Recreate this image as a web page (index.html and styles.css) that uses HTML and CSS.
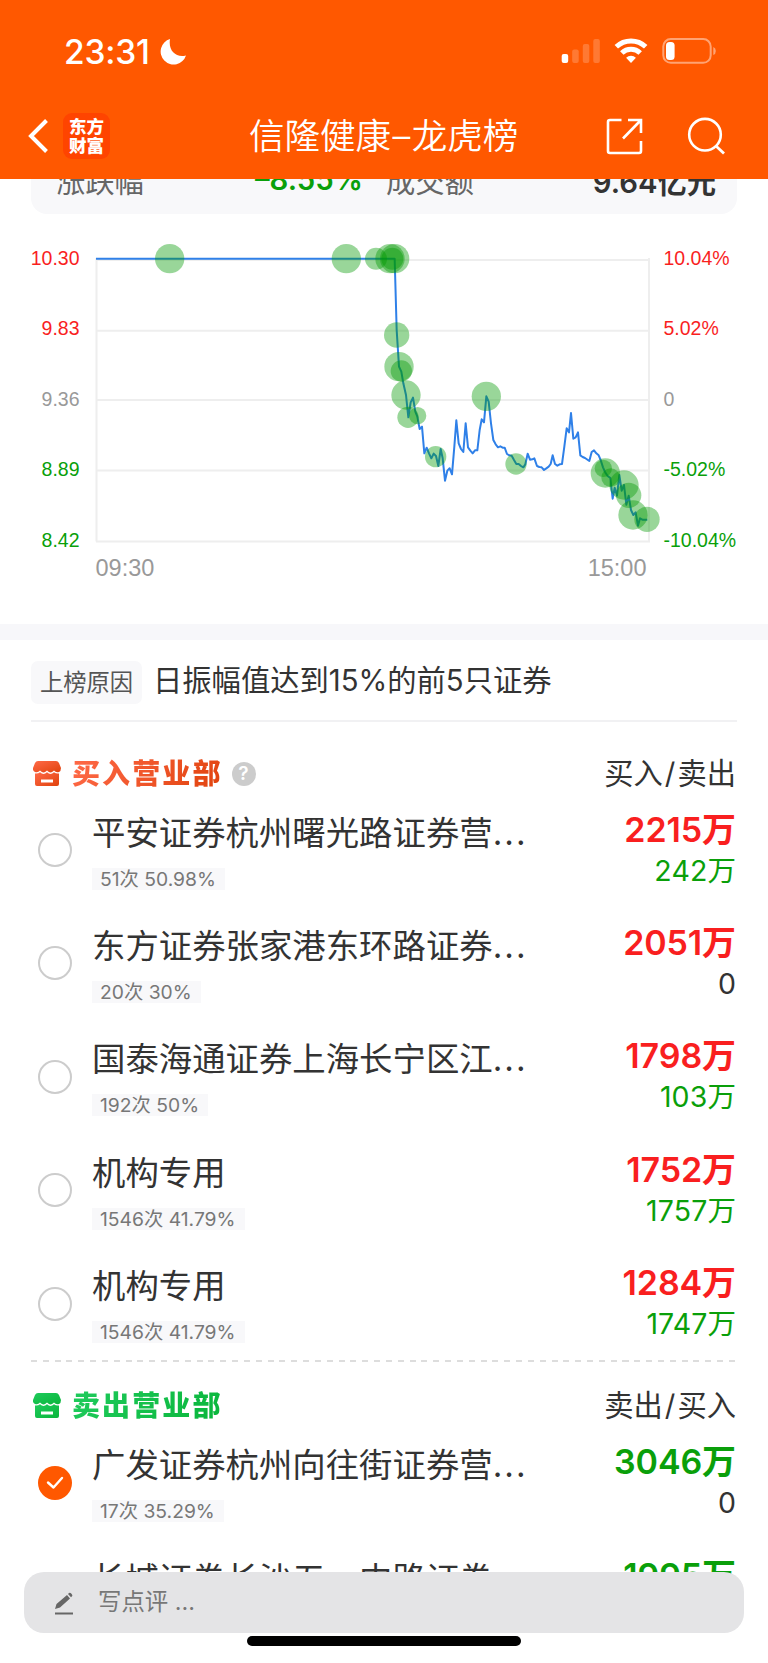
FILE: index.html
```
<!DOCTYPE html>
<html lang="zh-CN">
  <head>
    <meta charset="utf-8">
    <title>信隆健康–龙虎榜</title>
    <link rel="stylesheet" href="styles.css">
  </head>
  <body>
    <div class="screen">
      <header class="top">
        <div class="status">
          <span class="time">23:31</span>
          <svg class="moon" width="28" height="28" viewBox="0 0 28 28"><path d="M11 1A13 13 0 1 0 27 17.5C17 20 9 13 11 1Z" fill="#fff"/></svg>
          <svg class="signals" width="160" height="28" viewBox="0 0 160 28">
            <g fill="#fff">
              <rect x="1.7" y="16" width="6.5" height="9" rx="2"/>
              <g opacity=".2">
                <rect x="12.2" y="11.5" width="6.5" height="13.5" rx="2"/>
                <rect x="22.8" y="6" width="6.5" height="19" rx="2"/>
                <rect x="33.3" y="1" width="6.5" height="24" rx="2"/>
              </g>
            </g>
            <g fill="none" stroke="#fff" stroke-width="5">
              <path d="M56.300 8.800a21.500 21.500 0 0 1 29.400 0"/>
              <path d="M61.800 15a13.300 13.300 0 0 1 18.400 0"/>
            </g>
            <path d="M66.100 19.800a7 7 0 0 1 9.800 0L71 25Z" fill="#fff"/>
            <rect x="103.300" y="1" width="47.400" height="23.800" rx="7.500" fill="none" stroke="#fff" stroke-opacity=".45" stroke-width="2"/>
            <rect x="106" y="4" width="8.600" height="18" rx="3.500" fill="#fff"/>
            <path d="M153.300 9v8q2.500-1 2.500-4t-2.500-4Z" fill="#fff" opacity=".45"/>
          </svg>
        </div>
        <nav class="nav">
          <svg class="back" width="20" height="36" viewBox="0 0 20 36"><path d="M18.500 2.500 3 18l15.500 15.500" fill="none" stroke="#fff" stroke-width="4"/></svg>
          <div class="logo">东方<br>财富</div>
          <h1 class="title">信隆健康<span class="dash">–</span>龙虎榜</h1>
          <svg class="share" width="38" height="38" viewBox="0 0 38 38"><path d="M15.500 3H4q-2 0-2 2v29q0 2 2 2h29q2 0 2-2V24M22 3h13v13M34.500 3.500 17 21.500" fill="none" stroke="#fff" stroke-width="2.600"/></svg>
          <svg class="search" width="38" height="38" viewBox="0 0 38 38"><circle cx="18" cy="17.700" r="15.800" fill="none" stroke="#fff" stroke-width="2.600"/><path d="m29 29 8 7.500" stroke="#fff" stroke-width="2.800"/></svg>
        </nav>
      </header>

      <div class="stats">
        <span class="label">涨跌幅</span>
        <b class="change">–8.55%</b>
        <span class="label">成交额</span>
        <b class="turnover">9.64亿元</b>
      </div>

      <svg class="chart" width="768" height="410" viewBox="0 214 768 410">
        <g stroke="#eee" stroke-width="2" fill="none">
          <path d="M96 260H650M96 330.700H650M96 400H650M96 470.500H650M96 541.500H650M96.500 258V541.500M649 258V541.500"/>
        </g>
        <g class="axis" text-anchor="end">
          <text class="up" x="79.500" y="264.500">10.30</text>
          <text class="up" x="79.500" y="335">9.83</text>
          <text x="79.500" y="405.500">9.36</text>
          <text class="down" x="79.500" y="476">8.89</text>
          <text class="down" x="79.500" y="546.500">8.42</text>
        </g>
        <g class="axis">
          <text class="up" x="663.500" y="264.500">10.04%</text>
          <text class="up" x="663.500" y="335">5.02%</text>
          <text x="663.500" y="405.500">0</text>
          <text class="down" x="663.500" y="476">-5.02%</text>
          <text class="down" x="663.500" y="546.500">-10.04%</text>
        </g>
        <g class="hours">
          <text x="95.500" y="576">09:30</text>
          <text x="646.500" y="576" text-anchor="end">15:00</text>
        </g>
        <g transform="translate(384 230) scale(.33333)">
          <polyline fill="none" stroke="#2f80e8" stroke-width="6" stroke-linejoin="round" points="-864,86 32,86 38,300 45,410 52,425 58,460 66,495 73,562 80,517 87,503 94,545 100,560 107,597 114,590 121,670 128,653 135,670 142,685 149,671 156,678 163,708 170,657 176,685 183,752 190,722 197,715 204,733 211,650 217,571 224,640 231,657 238,666 245,580 252,652 259,662 266,670 273,661 280,661 287,600 293,568 300,577 307,499 314,515 321,580 328,630 335,643 342,652 349,649 356,653 362,653 369,672 376,676 383,677 390,690 397,702 404,702 411,708 418,712 424,703 431,671 438,689 445,688 451,685 459,708 466,711 473,712 480,720 487,715 494,710 500,702 506,676 513,702 520,707 527,703 534,702 541,650 548,595 555,607 561,549 568,626 575,622 582,607 589,676 596,681 603,684 616,693 623,666 630,661 637,670 644,676 650,690 657,712 664,728 671,738 679,744 686,806 692,773 699,797 706,735 713,782 720,765 727,824 734,797 741,840 748,855 755,847 762,887 768,865 775,869 790,869"/>
          <g fill="#090" fill-opacity=".4">
            <circle cx="-643" cy="86" r="44"/>
            <circle cx="-113" cy="86" r="44"/>
            <circle cx="-24" cy="86" r="33"/>
            <circle cx="18" cy="86" r="44"/>
            <circle cx="25" cy="86" r="33"/>
            <circle cx="32" cy="86" r="44"/>
            <circle cx="38" cy="315" r="38"/>
            <circle cx="45" cy="410" r="44"/>
            <circle cx="52" cy="423" r="32"/>
            <circle cx="66" cy="495" r="44"/>
            <circle cx="72" cy="562" r="32"/>
            <circle cx="101" cy="557" r="26"/>
            <circle cx="155" cy="680" r="32"/>
            <circle cx="307" cy="499" r="44"/>
            <circle cx="396" cy="702" r="32"/>
            <circle cx="664" cy="729" r="44"/>
            <circle cx="658" cy="715" r="26"/>
            <circle cx="680" cy="743" r="28"/>
            <circle cx="720" cy="765" r="44"/>
            <circle cx="734" cy="796" r="38"/>
            <circle cx="747" cy="855" r="44"/>
            <circle cx="789" cy="868" r="38"/>
          </g>
        </g>
      </svg>

      <div class="reason">
        <span class="reason-tag">上榜原因</span>
        <span class="reason-text">日振幅值达到15%的前5只证券</span>
      </div>

      <section class="board">
        <div class="board-head">
          <svg class="shop" width="28" height="26" viewBox="0 0 28 26">
            <defs><linearGradient id="red" x2="1" y2="1"><stop stop-color="#ff6a48"/><stop offset="1" stop-color="#e0420c"/></linearGradient></defs>
            <path fill="url(#red)" d="M5 0h18q2 0 3 2l2 5q0 3-2 4-3 1-5-1.500-2 2-3.500 2T14 9.500q-2 2-3.500 2T7 9.500Q5 12 2 11-.5 10 0 7l2-5q1-2 3-2Z"/>
            <path fill="url(#red)" fill-rule="evenodd" d="M2 12.500q3 .5 5-1.200 3.500 3.500 7 0 3.500 3.500 7 0 2 1.700 5 1.200v10.500q0 2-2 2H4q-2 0-2-2ZM8 18.500v3h12v-3Z"/>
          </svg>
          <h2 class="board-title buy">买入营业部</h2>
          <span class="help">?</span>
          <span class="cols">买入<span class="slash">/</span>卖出</span>
        </div>
        <div class="row">
          <i class="radio"></i>
          <div class="info"><div class="name">平安证券杭州曙光路证券营<span class="dots">...</span></div><span class="tag">51次 50.98%</span></div>
          <div class="amount"><b class="up">2215万</b><span class="down">242万</span></div>
        </div>
        <div class="row">
          <i class="radio"></i>
          <div class="info"><div class="name">东方证券张家港东环路证券<span class="dots">...</span></div><span class="tag">20次 30%</span></div>
          <div class="amount"><b class="up">2051万</b><span>0</span></div>
        </div>
        <div class="row">
          <i class="radio"></i>
          <div class="info"><div class="name">国泰海通证券上海长宁区江<span class="dots">...</span></div><span class="tag">192次 50%</span></div>
          <div class="amount"><b class="up">1798万</b><span class="down">103万</span></div>
        </div>
        <div class="row">
          <i class="radio"></i>
          <div class="info"><div class="name">机构专用</div><span class="tag">1546次 41.79%</span></div>
          <div class="amount"><b class="up">1752万</b><span class="down">1757万</span></div>
        </div>
        <div class="row">
          <i class="radio"></i>
          <div class="info"><div class="name">机构专用</div><span class="tag">1546次 41.79%</span></div>
          <div class="amount"><b class="up">1284万</b><span class="down">1747万</span></div>
        </div>
      </section>

      <section class="board sell-board">
        <div class="board-head">
          <svg class="shop" width="28" height="26" viewBox="0 0 28 26">
            <defs><linearGradient id="green" x2="1" y2="1"><stop stop-color="#1fcb5c"/><stop offset="1" stop-color="#09b53a"/></linearGradient></defs>
            <path fill="url(#green)" d="M5 0h18q2 0 3 2l2 5q0 3-2 4-3 1-5-1.500-2 2-3.500 2T14 9.500q-2 2-3.500 2T7 9.500Q5 12 2 11-.5 10 0 7l2-5q1-2 3-2Z"/>
            <path fill="url(#green)" fill-rule="evenodd" d="M2 12.500q3 .5 5-1.200 3.500 3.500 7 0 3.500 3.500 7 0 2 1.700 5 1.200v10.500q0 2-2 2H4q-2 0-2-2ZM8 18.500v3h12v-3Z"/>
          </svg>
          <h2 class="board-title sell">卖出营业部</h2>
          <span class="cols">卖出<span class="slash">/</span>买入</span>
        </div>
        <div class="row">
          <i class="radio checked"><svg width="18" height="14" viewBox="0 0 18 14"><path d="m2 6.500 5.500 5L16 2" fill="none" stroke="#fff" stroke-width="2.400" stroke-linecap="round" stroke-linejoin="round"/></svg></i>
          <div class="info"><div class="name">广发证券杭州向往街证券营<span class="dots">...</span></div><span class="tag">17次 35.29%</span></div>
          <div class="amount"><b class="down">3046万</b><span>0</span></div>
        </div>
        <div class="row">
          <div class="info"><div class="name">长城证券长沙五一中路证券</div></div>
          <div class="amount"><b class="down">1995万</b></div>
        </div>
      </section>

      <footer class="bottom">
        <div class="comment">
          <svg class="pencil" width="20" height="24" viewBox="0 0 20 24"><path d="M1 22.500h18" stroke="#666" stroke-width="2"/><path fill="#666" d="m1 18 1.500-5L13 4l3 3.500L6 16.500ZM14 3l1-1q1-.8 2 .2l1 1.200q.8 1 0 1.800l-1 1Z"/></svg>
          <span>写点评 ...</span>
        </div>
        <div class="home"></div>
      </footer>
    </div>
  </body>
</html>
```

FILE: styles.css
```
body {
  margin: 0;
  background: #fff;
  color: #333;
  font-family: Inter, "Noto Sans CJK SC", sans-serif;
}

.screen {
  position: relative;
  width: 768px;
  height: 1663px;
  overflow: hidden;
}

.up { color: #f91f1f; fill: #f91f1f; }
.down { color: #0a9f0a; fill: #0a9f0a; }

/* header */
.top {
  position: relative;
  z-index: 1;
  height: 179px;
  background: #ff5800;
  color: #fff;
}

.status {
  display: flex;
  align-items: center;
  height: 104px;
  padding: 0 48px 0 64px;
}

.time {
  font-size: 33.5px;
  font-weight: 550;
  width: 95px;
  letter-spacing: -0.2px;
}

.signals { margin-left: auto; }

.nav {
  display: flex;
  align-items: center;
  height: 64px;
  padding: 0 43px 0 28px;
}

.logo {
  width: 47px;
  height: 38px;
  margin-left: 15px;
  padding: 4px 0;
  border-radius: 9px;
  background: #ff4400;
  font-size: 17.5px;
  line-height: 19px;
  font-weight: 900;
  text-align: center;
}

.title {
  margin: 2px 0 0 139px;
  width: 272px;
  font-size: 35.5px;
  line-height: 50px;
  font-weight: 350;
  white-space: nowrap;
}

.dash { padding: 0 1.5px; }

.share { margin-left: 85px; }
.search { margin-left: auto; }

/* summary card, scrolled half under the header */
.stats {
  display: flex;
  align-items: center;
  box-sizing: border-box;
  height: 68px;
  margin: -33px 31px 0;
  padding: 0 21px 3px 25px;
  border-radius: 16px;
  background: #f8f8fa;
  font-size: 29.3px;
  white-space: nowrap;
}

.stats .label { color: #666; }

.stats b {
  padding-top: 2px;
  font-weight: 600;
}

.change {
  width: 106px;
  margin: 0 25px 0 111px;
  color: #0a9f0a;
}

.turnover { margin-left: auto; }

/* chart */
.chart {
  display: block;
  border-bottom: 16px solid #f7f7fa;
}

.axis {
  font: 19.5px "Liberation Sans", sans-serif;
  fill: #999;
}

.hours {
  font: 23.5px "Liberation Sans", sans-serif;
  fill: #999;
}

/* reason */
.reason {
  display: flex;
  align-items: center;
  height: 80px;
  margin: 0 31px;
  border-bottom: 2px solid #f1f1f3;
}

.reason-tag {
  width: 111px;
  height: 43px;
  margin: 4px 11px 0 0;
  border-radius: 7px;
  background: #f8f8fa;
  color: #555;
  font-size: 23.3px;
  line-height: 43px;
  text-align: center;
}

.reason-text {
  margin-top: 2px;
  font-size: 29.3px;
  line-height: 40px;
}

/* boards */
.board {
  padding: 31.5px 32px 0 33px;
}

.sell-board {
  padding-top: 26px;
  background: repeating-linear-gradient(90deg, #ddd 0 6px, transparent 6px 11.83px) 31px 0 / 706px 2px no-repeat;
}

.board-head {
  display: flex;
  align-items: center;
  box-sizing: border-box;
  height: 40px;
}

.board-title {
  margin: 0 0 0 11px;
  font-size: 28px;
  line-height: 40px;
  font-weight: 900;
  letter-spacing: 2.1px;
  color: transparent;
  -webkit-background-clip: text;
  background-clip: text;
}

.board-title.buy { background-image: linear-gradient(120deg, #ff6a48, #e0420c); }
.board-title.sell { background-image: linear-gradient(120deg, #1fcb5c, #09b53a); }

.help {
  width: 24px;
  height: 24px;
  margin-left: 9px;
  border-radius: 50%;
  background: #ccc;
  color: #fff;
  font-size: 19px;
  line-height: 24px;
  font-weight: 600;
  text-align: center;
}

.cols {
  margin-left: auto;
  font-size: 29.3px;
  line-height: 40px;
}

.slash { padding: 0 2px; }

.row {
  display: flex;
  height: 113.4px;
}

.radio {
  box-sizing: border-box;
  width: 34px;
  height: 34px;
  margin: 39.5px 0 0 5px;
  border: 2.5px solid #ccc;
  border-radius: 50%;
}

.radio.checked {
  display: flex;
  align-items: center;
  justify-content: center;
  border: 0;
  background: #ff5800;
}

.info {
  width: 460px;
  margin-left: 20px;
}

.info:first-child { margin-left: 59px; }

.name {
  height: 44px;
  margin: 17px 0 13px;
  font-size: 33.4px;
  line-height: 44px;
  white-space: nowrap;
}

.dots { letter-spacing: 2px; }

.tag {
  display: block;
  width: max-content;
  height: 22px;
  padding: 0 9px 0 8px;
  background: #f8f8fa;
  color: #777;
  font-size: 19.3px;
  line-height: 22px;
}

.amount {
  display: flex;
  flex-direction: column;
  margin-left: auto;
  text-align: right;
}

.amount b {
  margin-top: 15px;
  font-size: 34px;
  line-height: 42px;
  font-weight: 600;
  letter-spacing: -0.1px;
}

.amount span {
  font-size: 28.5px;
  line-height: 40px;
  letter-spacing: 0.1px;
}

/* comment bar */
.bottom {
  position: absolute;
  left: 24px;
  right: 24px;
  bottom: 0;
  height: 91px;
  background: linear-gradient(transparent 50px, #fff 50px);
}

.comment {
  display: flex;
  align-items: center;
  height: 61px;
  padding-left: 30px;
  border-radius: 20px;
  background: #e4e4e6;
  color: #777;
  font-size: 23.4px;
}

.comment span {
  margin: -6px 0 0 24px;
}

.home {
  width: 274px;
  height: 10px;
  margin: 3px auto 0;
  border-radius: 5px;
  background: #000;
}
```
